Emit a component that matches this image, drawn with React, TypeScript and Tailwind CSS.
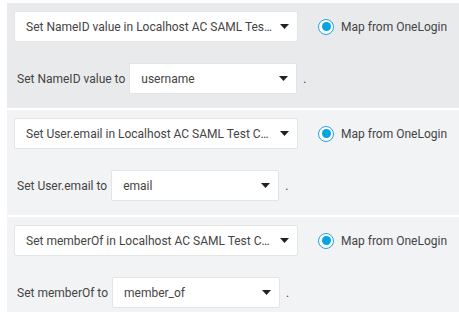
const mappings = [
  {
    target: 'Set NameID value in Localhost AC SAML Test Connector (Advanced)',
    label: 'Set NameID value to',
    value: 'username',
    bg: 'bg-[#e9eaec]',
  },
  {
    target: 'Set User.email in Localhost AC SAML Test Connector (Advanced)',
    label: 'Set User.email to',
    value: 'email',
    bg: 'bg-[#f2f3f5]',
  },
  {
    target: 'Set memberOf in Localhost AC SAML Test Connector (Advanced)',
    label: 'Set memberOf to',
    value: 'member_of',
    bg: 'bg-[#f2f3f5]',
  },
]

function Caret() {
  return (
    <svg width="9" height="5" viewBox="0 0 9 5" className="shrink-0">
      <path d="M0 0h9L4.5 5z" fill="#222" />
    </svg>
  )
}

function Select({ text, width }: { text: string; width: string }) {
  return (
    <div
      className={`${width} flex h-[31px] shrink-0 items-center gap-[6px] rounded-[2px] border border-[#e3e4e6] bg-white pl-[11px] pr-[8px]`}
    >
      <span className="min-w-0 flex-1 truncate">{text}</span>
      <Caret />
    </div>
  )
}

export default function App() {
  return (
    <div className="flex flex-col gap-[2px] bg-white pl-[7px] pt-[3px] font-['Roboto',sans-serif] text-[12px] text-[#444]">
      {mappings.map((m) => (
        <section key={m.label} className={`${m.bg} pb-[14px] pl-[7px] pt-[8px]`}>
          <div className="flex items-center">
            <Select text={m.target} width="w-[284px]" />
            <label className="ml-[20px] flex items-center gap-[7px]">
              <span className="flex h-[16px] w-[16px] items-center justify-center rounded-full border-[1.5px] border-[#1ea5dd] bg-white">
                <span className="h-[9px] w-[9px] rounded-full bg-[#04a4e0]" />
              </span>
              Map from OneLogin
            </label>
          </div>
          <div className="mt-[21px] flex items-center">
            <span className="ml-[3px] mr-[4px]">{m.label}</span>
            <Select text={m.value} width="w-[168px]" />
            <span className="ml-[6px]">.</span>
          </div>
        </section>
      ))}
    </div>
  )
}
